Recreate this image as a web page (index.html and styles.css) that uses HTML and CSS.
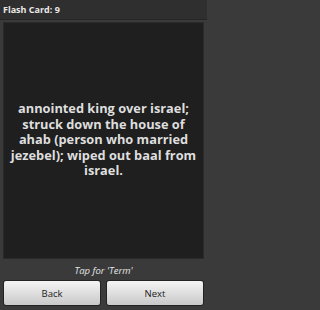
FILE: index.html
```html
<!DOCTYPE html>
<html>
<head>
<meta charset="utf-8">
<link rel="stylesheet" href="styles.css">
</head>
<body>
<div class="app">
  <div class="titlebar">Flash Card: 9</div>
  <div class="card">
    <p class="card-text">annointed king over israel; struck down the house of ahab (person who married jezebel); wiped out baal from israel.</p>
  </div>
  <div class="hint">Tap for 'Term'</div>
  <div class="buttons">
    <button class="btn">Back</button>
    <button class="btn">Next</button>
  </div>
</div>
</body>
</html>
```
FILE: styles.css
```css
html, body {
  margin: 0;
  padding: 0;
  background: #3a3a3a;
}
.app {
  width: 207px;
  height: 310px;
  display: flex;
  flex-direction: column;
  font-family: "Open Sans", "DejaVu Sans", sans-serif;
  box-sizing: border-box;
}
.titlebar {
  height: 20px;
  background: #2f2f2f;
  color: #e8e8e8;
  font-weight: bold;
  font-size: 9px;
  line-height: 19px;
  padding-left: 3px;
  border-bottom: 1px solid #262626;
  box-sizing: border-box;
}
.card {
  margin: 2px 3px 0 3px;
  height: 237px;
  background: #1f1f1f;
  border: 1px solid #2a2a2a;
  box-sizing: border-box;
  display: flex;
  align-items: center;
  justify-content: center;
  padding: 0 5px;
}
.card-text {
  margin: 0 0 1px 0;
  color: #dedede;
  font-weight: bold;
  font-size: 12.8px;
  line-height: 15.4px;
  text-align: center;
}
.hint {
  height: 21px;
  line-height: 24px;
  text-align: center;
  color: #e6e6e6;
  font-style: italic;
  font-size: 9.5px;
}
.buttons {
  display: flex;
  gap: 5px;
  padding: 0 3px;
  height: 26px;
}
.btn {
  flex: 1;
  height: 26px;
  border: 1px solid #222;
  border-radius: 3px;
  background: linear-gradient(#f4f4f4, #c9c9c9);
  color: #222;
  font-family: "Open Sans", "DejaVu Sans", sans-serif;
  font-size: 9.5px;
  padding: 0;
}
```
